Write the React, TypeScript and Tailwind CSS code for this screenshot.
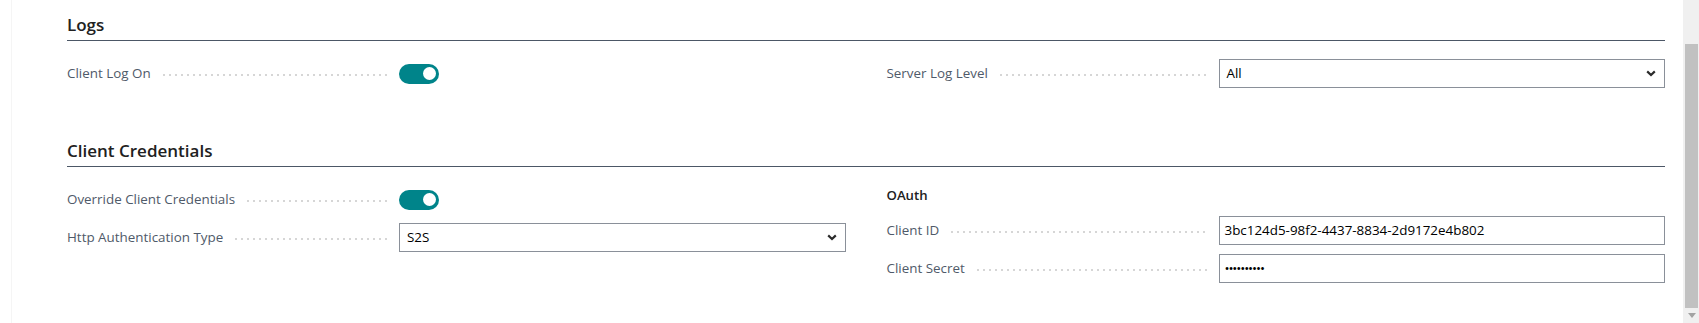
import React from "react";

const FONT = "font-['Segoe_UI','Open_Sans','Noto_Sans',sans-serif]";

function Dots() {
  return (
    <div className="flex-1 ml-[12px] mr-[11px] mt-[2px] h-[2px] bg-[linear-gradient(to_right,#d6d6d6_2px,transparent_2px)] bg-[length:6px_2px] bg-repeat-x" />
  );
}

function Field({ label, children }: { label: string; children: React.ReactNode }) {
  return (
    <div className="flex items-center h-[29px]">
      <div className="w-[332px] flex items-center">
        <span className="text-[13.4px] text-[#4f5a69] whitespace-nowrap leading-none">{label}</span>
        <Dots />
      </div>
      <div className="flex-1 flex items-center">{children}</div>
    </div>
  );
}

function Toggle() {
  return (
    <div className="w-[40px] h-[20px] rounded-full bg-[#00848a] flex items-center justify-end pr-[3px]">
      <div className="w-[13px] h-[13px] rounded-full bg-white" />
    </div>
  );
}

function Chevron() {
  return (
    <svg width="10" height="7" viewBox="0 0 10 7" className="shrink-0">
      <path d="M1.2 1.4 L5 5 L8.8 1.4" fill="none" stroke="#2b2b2b" strokeWidth="2.2" />
    </svg>
  );
}

function Select({ value }: { value: string }) {
  return (
    <div className="w-full h-[29px] border border-[#8a9099] flex items-center pl-[7px] pr-[8px]">
      <span className="flex-1 text-[13.4px] text-black leading-none">{value}</span>
      <Chevron />
    </div>
  );
}

function Input({ value, tight }: { value: string; tight?: boolean }) {
  return (
    <div className="w-full h-[29px] border border-[#8a9099] flex items-center pl-[5px]">
      <span
        className={
          tight
            ? "text-[13.4px] text-black leading-none tracking-[-1.1px]"
            : "text-[13.4px] text-black leading-none"
        }
      >
        {value}
      </span>
    </div>
  );
}

function Heading({ title, className }: { title: string; className?: string }) {
  return (
    <div className={"h-[41px] border-b border-[#4c5766] flex items-end pb-[3px] " + (className ?? "")}>
      <span className="text-[17px] leading-[24px] font-semibold text-[#212121]">{title}</span>
    </div>
  );
}

export default function App() {
  return (
    <div className={"w-[1699px] h-[323px] overflow-hidden bg-white flex " + FONT}>
      <div className="w-[12px] h-full border-r border-[#f5f5f5]" />
      <div className="flex-1 pl-[55px] pr-[18px]">
        <Heading title="Logs" />
        <div className="grid grid-cols-2 gap-x-[41px] pt-[18px]">
          <div>
            <Field label="Client Log On">
              <Toggle />
            </Field>
          </div>
          <div>
            <Field label="Server Log Level">
              <Select value="All" />
            </Field>
          </div>
        </div>

        <Heading title="Client Credentials" className="mt-[38px]" />
        <div className="grid grid-cols-2 gap-x-[41px] pt-[18px]">
          <div className="flex flex-col gap-[9px]">
            <Field label="Override Client Credentials">
              <Toggle />
            </Field>
            <Field label="Http Authentication Type">
              <Select value="S2S" />
            </Field>
          </div>
          <div className="flex flex-col gap-[9px]">
            <div className="h-[22px] flex items-center">
              <span className="text-[13.2px] font-semibold text-[#212121] leading-none">OAuth</span>
            </div>
            <Field label="Client ID">
              <Input value="3bc124d5-98f2-4437-8834-2d9172e4b802" />
            </Field>
            <Field label="Client Secret">
              <Input value="••••••••••" tight />
            </Field>
          </div>
        </div>
      </div>
      <div className="w-[16px] h-full bg-[#f0f0f0] flex flex-col pt-[44px] pl-[2px] pr-[1px]">
        <div className="h-[264px] bg-[#c1c1c1]" />
        <div className="mt-[5px] flex justify-center">
          <svg width="8" height="5" viewBox="0 0 8 5">
            <path d="M0 0 H8 L4 5 Z" fill="#a3a3a3" />
          </svg>
        </div>
      </div>
    </div>
  );
}
